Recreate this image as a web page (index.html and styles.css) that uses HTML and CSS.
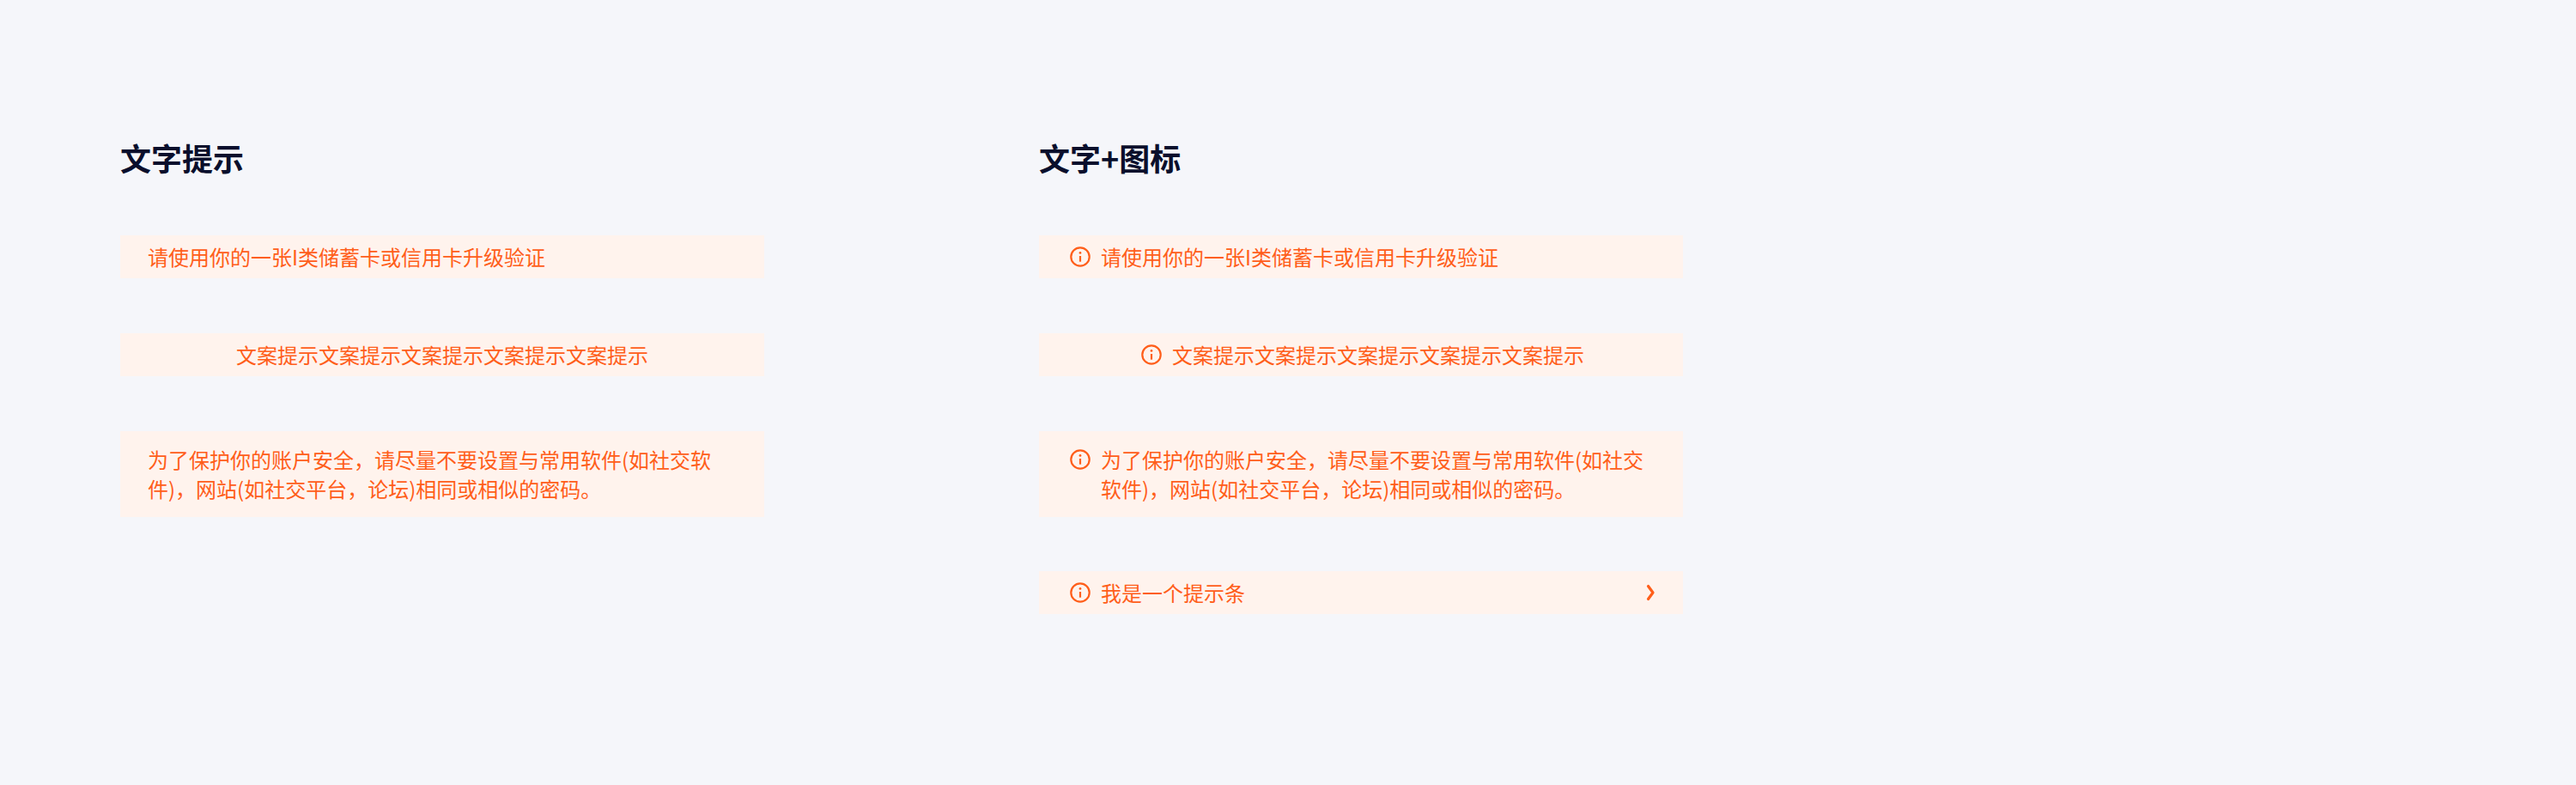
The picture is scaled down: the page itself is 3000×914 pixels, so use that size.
FILE: index.html
```html
<!DOCTYPE html>
<html lang="zh-CN">
<head>
    <meta charset="UTF-8">
    <title>提示条</title>
    <link rel="stylesheet" href="styles.css">
</head>
<body>
    <div class="page">
        <section class="column">
            <h2 class="title">文字提示</h2>
            <div class="notice">
                <span class="notice-text">请使用你的一张I类储蓄卡或信用卡升级验证</span>
            </div>
            <div class="notice center">
                <span class="notice-text">文案提示文案提示文案提示文案提示文案提示</span>
            </div>
            <div class="notice multi">
                <span class="notice-text">为了保护你的账户安全，请尽量不要设置与常用软件(如社交软件)，网站(如社交平台，论坛)相同或相似的密码。</span>
            </div>
        </section>

        <section class="column">
            <h2 class="title">文字+图标</h2>
            <div class="notice">
                <svg class="icon" viewBox="0 0 32 32"><circle cx="16" cy="16" r="10.7" /><path d="M16 15v6.7" /><circle class="dot" cx="16" cy="11.4" r="1.4" /></svg>
                <span class="notice-text">请使用你的一张I类储蓄卡或信用卡升级验证</span>
            </div>
            <div class="notice center">
                <svg class="icon" viewBox="0 0 32 32"><circle cx="16" cy="16" r="10.7" /><path d="M16 15v6.7" /><circle class="dot" cx="16" cy="11.4" r="1.4" /></svg>
                <span class="notice-text">文案提示文案提示文案提示文案提示文案提示</span>
            </div>
            <div class="notice multi">
                <svg class="icon" viewBox="0 0 32 32"><circle cx="16" cy="16" r="10.7" /><path d="M16 15v6.7" /><circle class="dot" cx="16" cy="11.4" r="1.4" /></svg>
                <span class="notice-text">为了保护你的账户安全，请尽量不要设置与常用软件(如社交软件)，网站(如社交平台，论坛)相同或相似的密码。</span>
            </div>
            <div class="notice tail">
                <svg class="icon" viewBox="0 0 32 32"><circle cx="16" cy="16" r="10.7" /><path d="M16 15v6.7" /><circle class="dot" cx="16" cy="11.4" r="1.4" /></svg>
                <span class="notice-text grow">我是一个提示条</span>
                <svg class="icon arrow" viewBox="0 0 32 32"><path d="M23.5 8.5l5.5 7.5-5.5 7.5" /></svg>
            </div>
        </section>
    </div>
</body>
</html>
```

FILE: styles.css
```css
body {
    margin: 0;
    background-color: #f5f6fa;
    font-family: "Noto Sans CJK SC", "Noto Sans", sans-serif;
}
.page {
    display: grid;
    grid-template-columns: 750px 750px;
    column-gap: 320px;
    padding: 158px 0 0 140px;
}
.column {
    display: flex;
    flex-direction: column;
    gap: 64px;
}
.title {
    margin: 0 0 2px;
    font-size: 36px;
    line-height: 50px;
    font-weight: 700;
    color: #0a0f2c;
}
.notice {
    display: flex;
    align-items: flex-start;
    gap: 8px;
    padding: 8px 32px;
    background-color: #fff3ed;
    color: #ff5e1a;
    font-size: 24px;
    line-height: 34px;
}
.notice.center {
    justify-content: center;
}
.notice.multi {
    padding: 16px 32px;
}
.notice.tail {
    margin-top: -1px;
}
.grow {
    flex: 1;
}
.icon {
    flex: none;
    width: 32px;
    height: 34px;
    fill: none;
    stroke: #ff5e1a;
    stroke-width: 2.2;
}
.icon .dot {
    fill: #ff5e1a;
    stroke: none;
}
.arrow {
    stroke-width: 3.2;
    stroke-linecap: round;
    stroke-linejoin: round;
}
```
